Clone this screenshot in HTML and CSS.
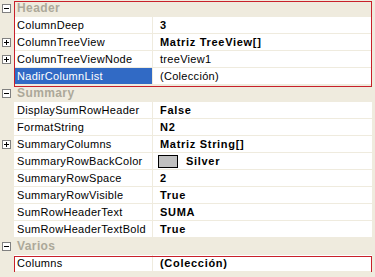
FILE: index.html
```html
<!DOCTYPE html>
<html lang="es">
<head>
    <meta charset="UTF-8">
    <title>PropertyGrid</title>
    <link rel="stylesheet" href="styles.css">
</head>
<body>
    <div class="grid">
        <!-- Header -->
        <div class="row cat">
            <span class="gutter"><i class="box minus"></i></span>
            <span class="name">Header</span>
        </div>
        <div class="row">
            <span class="gutter"></span>
            <span class="name">ColumnDeep</span>
            <span class="value b">3</span>
        </div>
        <div class="row">
            <span class="gutter"><i class="box plus"></i></span>
            <span class="name">ColumnTreeView</span>
            <span class="value b">Matriz TreeView[]</span>
        </div>
        <div class="row">
            <span class="gutter"><i class="box plus"></i></span>
            <span class="name">ColumnTreeViewNode</span>
            <span class="value">treeView1</span>
        </div>
        <div class="row">
            <span class="gutter"></span>
            <span class="name selected">NadirColumnList</span>
            <span class="value">(Colección)</span>
        </div>
        <!-- Summary -->
        <div class="row cat">
            <span class="gutter"><i class="box minus"></i></span>
            <span class="name">Summary</span>
        </div>
        <div class="row">
            <span class="gutter"></span>
            <span class="name">DisplaySumRowHeader</span>
            <span class="value b">False</span>
        </div>
        <div class="row">
            <span class="gutter"></span>
            <span class="name">FormatString</span>
            <span class="value b">N2</span>
        </div>
        <div class="row">
            <span class="gutter"><i class="box plus"></i></span>
            <span class="name">SummaryColumns</span>
            <span class="value b">Matriz String[]</span>
        </div>
        <div class="row">
            <span class="gutter"></span>
            <span class="name">SummaryRowBackColor</span>
            <span class="value b"><i class="swatch"></i>Silver</span>
        </div>
        <div class="row">
            <span class="gutter"></span>
            <span class="name">SummaryRowSpace</span>
            <span class="value b">2</span>
        </div>
        <div class="row">
            <span class="gutter"></span>
            <span class="name">SummaryRowVisible</span>
            <span class="value b">True</span>
        </div>
        <div class="row">
            <span class="gutter"></span>
            <span class="name">SumRowHeaderText</span>
            <span class="value b">SUMA</span>
        </div>
        <div class="row">
            <span class="gutter"></span>
            <span class="name">SumRowHeaderTextBold</span>
            <span class="value b">True</span>
        </div>
        <!-- Varios -->
        <div class="row cat">
            <span class="gutter"><i class="box minus"></i></span>
            <span class="name">Varios</span>
        </div>
        <div class="row">
            <span class="gutter"></span>
            <span class="name">Columns</span>
            <span class="value b">(Colección)</span>
        </div>

        <!--红框标注-->
        <div class="mark mark-header"></div>
        <div class="mark mark-columns"></div>
    </div>
</body>
</html>
```

FILE: styles.css
```css
*{
    margin: 0;
    padding: 0;
    box-sizing: border-box;
}
body{
    background: #efebde;
    font-family: "Liberation Sans", Arial, sans-serif;
    font-size: 11px;
    letter-spacing: 0.3px;
    color: #000;
}
.grid{
    width: 372px;
    position: relative;
}
.row{
    display: flex;
    height: 17px;
    line-height: 16px;
}
.row .gutter{
    width: 14px;
    flex: none;
    display: flex;
    align-items: center;
    padding-left: 2px;
    padding-bottom: 1px;
}
.row .name{
    width: 139px;
    flex: none;
    padding-left: 3px;
    background: #fff;
    border-bottom: 1px solid #efebde;
    border-right: 1px solid #efebde;
    white-space: nowrap;
    overflow: hidden;
}
.row .value{
    flex: 1;
    padding-left: 7px;
    background: #fff;
    border-bottom: 1px solid #efebde;
    white-space: nowrap;
    display: flex;
    align-items: center;
}
.row .b{
    font-weight: bold;
    letter-spacing: 0.7px;
}
.row .name.selected{
    background: #316ac5;
    color: #fff;
}
.cat .name{
    flex: 1;
    width: auto;
    background: #efebde;
    border: 0;
    color: #aca899;
    font-weight: bold;
    font-size: 12px;
    letter-spacing: 0.4px;
}
.box{
    display: block;
    width: 9px;
    height: 9px;
    border: 1px solid #808080;
    background: #fff;
    position: relative;
}
.box:before,.box.plus:after{
    content: "";
    position: absolute;
    background: #000;
}
.box:before{
    left: 1px;
    top: 3px;
    width: 5px;
    height: 1px;
}
.box.plus:after{
    left: 3px;
    top: 1px;
    width: 1px;
    height: 5px;
}
.swatch{
    display: inline-block;
    width: 20px;
    height: 13px;
    border: 1px solid #000;
    background: #c0c0c0;
    margin-right: 8px;
    margin-left: -2px;
}
.mark{
    position: absolute;
    border: 1px solid #c8202a;
}
.mark-header{
    left: 14px;
    top: 1px;
    width: 358px;
    height: 86px;
}
.mark-columns{
    left: 14px;
    top: 256px;
    width: 358px;
    height: 17px;
}
```
